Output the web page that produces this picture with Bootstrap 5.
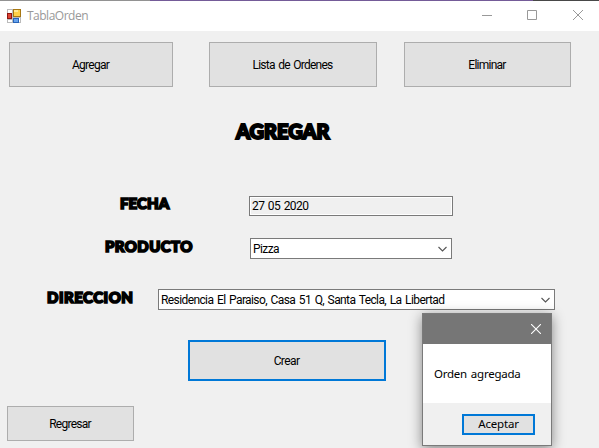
<!DOCTYPE html>
<html lang="es">
<head>
<meta charset="utf-8">
<meta name="viewport" content="width=device-width, initial-scale=1">
<title>TablaOrden</title>
<link href="https://cdn.jsdelivr.net/npm/bootstrap@5.3.0/dist/css/bootstrap.min.css" rel="stylesheet">
<style>
body{width:599px;height:448px;background:#f0f0f0;color:#000;font:12px/16px Roboto,"Liberation Sans",sans-serif;letter-spacing:-.6px;word-spacing:1.2px}
.edge{height:1px;background:linear-gradient(90deg,#929292 150px,#745b98 150px 533px,#484848 533px)}
.titlebar{height:30px;padding-left:7px;color:#999;font:12px/16px "Open Sans","Noto Sans",sans-serif;letter-spacing:-.5px}
.titlebar .caption{margin-left:6px}
.titlebar svg,.popup svg,.combo svg{display:block;flex:none}
.btn.win{--bs-btn-border-radius:0;--bs-btn-padding-x:0;--bs-btn-padding-y:0;--bs-btn-color:#000;--bs-btn-bg:#e1e1e1;--bs-btn-border-color:#adadad;--bs-btn-hover-bg:#e5f1fb;--bs-btn-hover-color:#000;font:inherit;letter-spacing:-.75px;word-spacing:1.2px;padding-right:1px}
.btn.focused{border:2px solid #0078d7}
.toolbar-row{padding:11px 0 0 9px;height:56px}
.w-add{width:164px}.w-list{width:168px;margin-left:36px}.w-del{width:167px;margin-left:27px}
.display{font-family:Lato,"Open Sans",sans-serif;font-weight:900;white-space:nowrap;-webkit-text-stroke:1.7px #000}
.heading{margin:32px 0 0 236px;height:24px;font-size:20px;line-height:24px;letter-spacing:0;-webkit-text-stroke-width:2px}
.label{font-size:15px;line-height:20px;padding-bottom:5px;flex:none}
.field{border:1px solid #7a7a7a;white-space:nowrap;flex:none}
.combo{background:#fff;height:21px;padding:0 4px 0 2px}
.readonly{width:204px;height:20px;box-shadow:inset 0 0 0 1px #fff;padding-left:2px}
.row-date{margin-top:53px;height:20px;padding-left:120px}
.row-date .label{width:129px;letter-spacing:.1px;padding-bottom:7px}
.row-product{margin-top:22px;height:21px;padding-left:105px}
.row-product .label{width:145px;letter-spacing:.4px}
.row-product .combo{width:202px}
.row-address{margin-top:30px;height:21px;padding-left:47px}
.row-address .label{width:111px;letter-spacing:.5px}
.row-address .combo{width:397px}
.btn.create{width:198px;height:41px;margin:30px 0 0 188px;letter-spacing:-.6px}
.back{width:127px;height:35px;margin:25px 0 0 7px}
.popup{left:422px;top:313px;width:130px;height:133px;border:1px solid #7a7a7a;background:#fff;box-shadow:0 3px 12px rgba(0,0,0,.45);font:11.5px/16px "Noto Sans","Open Sans",sans-serif;letter-spacing:-.25px}
.popup-head{height:30px;background:#767676;padding-right:10px}
.popup-text{height:59px;padding-left:11px}
.popup-foot{background:#f0f0f0;padding-right:16px}
.btn.accept{width:73px;height:21px;letter-spacing:-.2px;padding-right:0}
</style>
</head>
<body class="d-flex flex-column overflow-hidden position-relative">
<div class="edge flex-shrink-0"></div>
<header class="titlebar bg-white d-flex align-items-center flex-shrink-0">
  <svg width="14" height="14" viewBox="0 0 14 14"><path fill="#bbb" d="M0 0h14v14H0z"/><path fill="#fff" d="M1 1h4v3H1zM1 11h4v2H1zM12 9h1v4h-1z"/><path fill="#8f1510" d="M0 4h5v6H0z"/><path fill="#dd4434" d="M1 5h3v4H1z"/><path fill="#a77712" d="M6 0h8v8H6z"/><path fill="#ffd147" d="M7 1h6v6H7z"/><path fill="#ffe995" d="M7 1h4v2H7z"/><path fill="#2864b8" d="M6 9h6v5H6z"/><path fill="#67a3ed" d="M7 10h4v3H7z"/></svg>
  <span class="caption">TablaOrden</span>
  <svg class="ms-auto" width="117" height="30" viewBox="482 1 117 30" fill="none" stroke="#999"><path d="M482 15.5h10M527.5 10.5h9v9h-9z"/><path d="M573 10l10 10M583 10l-10 10"/></svg>
</header>
<nav class="toolbar-row d-flex flex-shrink-0">
  <button class="btn win w-add">Agregar</button>
  <button class="btn win w-list">Lista de Ordenes</button>
  <button class="btn win w-del">Eliminar</button>
</nav>
<main class="d-flex flex-column">
  <h1 class="display heading mb-0">AGREGAR</h1>
  <div class="row-date d-flex align-items-center"><span class="display label">FECHA</span><div class="field readonly d-flex align-items-center">27 05 2020</div></div>
  <div class="row-product d-flex align-items-center"><span class="display label">PRODUCTO</span>
    <div class="field combo d-flex align-items-center justify-content-between"><span>Pizza</span><svg width="9" height="6" viewBox="0 0 9 6" fill="none" stroke="#555" stroke-width="1.1"><path d="M.5 1l4 4 4-4"/></svg></div></div>
  <div class="row-address d-flex align-items-center"><span class="display label">DIRECCION</span>
    <div class="field combo d-flex align-items-center justify-content-between"><span>Residencia El Paraiso, Casa 51 Q, Santa Tecla, La Libertad</span><svg width="9" height="6" viewBox="0 0 9 6" fill="none" stroke="#555" stroke-width="1.1"><path d="M.5 1l4 4 4-4"/></svg></div></div>
  <button class="btn win focused create">Crear</button>
  <button class="btn win back">Regresar</button>
</main>
<section class="popup position-absolute d-flex flex-column" role="dialog">
  <div class="popup-head d-flex align-items-center justify-content-end flex-shrink-0"><svg width="10" height="10" viewBox="0 0 10 10" stroke="#fff" stroke-width="1.1"><path d="M0 0l10 10M10 0L0 10"/></svg></div>
  <div class="popup-text d-flex align-items-center flex-shrink-0">Orden agregada</div>
  <div class="popup-foot d-flex align-items-center justify-content-end flex-grow-1"><button class="btn win focused accept">Aceptar</button></div>
</section>
<script src="https://cdn.jsdelivr.net/npm/bootstrap@5.3.0/dist/js/bootstrap.bundle.min.js"></script>
</body>
</html>
